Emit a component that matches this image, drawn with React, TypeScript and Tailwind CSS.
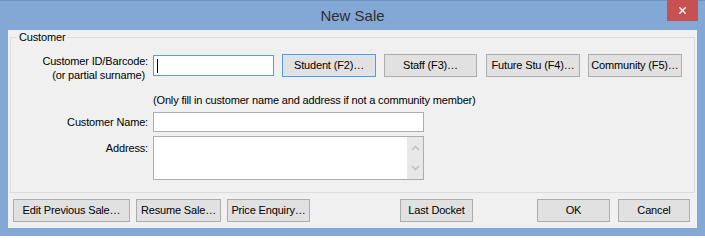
import { X } from 'lucide-react';

const lookupButtons = [
  { label: 'Student (F2)…', width: 'w-[94px]', gap: 'ml-[8px]', focused: true },
  { label: 'Staff (F3)…', width: 'w-[93px]', gap: 'ml-[8px]', focused: false },
  { label: 'Future Stu (F4)…', width: 'w-[94px]', gap: 'ml-[9px]', focused: false },
  { label: 'Community (F5)…', width: 'w-[94px]', gap: 'ml-[8px]', focused: false },
];

function Chevron({ up }: { up?: boolean }) {
  return (
    <svg width="9" height="6" viewBox="0 0 9 6" className="text-[#c2c2c2]">
      <path
        d={up ? 'M1 5 L4.5 1.5 L8 5' : 'M1 1 L4.5 4.5 L8 1'}
        fill="none"
        stroke="currentColor"
        strokeWidth="1.6"
      />
    </svg>
  );
}

export default function App() {
  return (
    <div className="w-[705px] h-[236px] bg-[#84a8d6] border-t border-[#6f92c4] flex flex-col px-[8px] pb-[8px] font-['Liberation_Sans',Arial,sans-serif] text-[11px] tracking-[-0.16px] text-black">
      {/* Title bar */}
      <div className="relative h-[29px] flex items-center justify-center">
        <span className="text-[15px] tracking-normal text-[#2e2e2e] leading-none -mt-[1px]">New Sale</span>
        <button className="absolute -top-[1px] -right-[1px] w-[31px] h-[21px] bg-[#c75050] flex items-center justify-center">
          <X className="w-[11px] h-[11px] text-white" strokeWidth={3} />
        </button>
      </div>

      {/* Client area */}
      <div className="flex-1 bg-[#f0f0f0] flex flex-col">
        {/* Customer group */}
        <div className="relative mt-[7px] mx-[2px] h-[156px] border border-[#dcdcdc] pt-[16px] px-0">
          <span className="absolute -top-[8px] left-[6px] px-[2px] bg-[#f0f0f0] leading-[14px]">Customer</span>

          <div className="flex items-start">
            <div className="w-[137px] text-right leading-[14px]">
              <div>Customer ID/Barcode:</div>
              <div className="pr-[3px]">(or partial surname)</div>
            </div>
            <div className="ml-[5px] mt-[1px] w-[121px] h-[21px] bg-white border border-[#569de5] flex items-center">
              <span className="ml-[3px] w-px h-[14px] bg-black" />
            </div>
            <div className="ml-[8px] flex">
              {lookupButtons.map((b, i) => (
                <button
                  key={b.label}
                  className={`${b.width} ${i > 0 ? b.gap : ''} h-[23px] bg-[#e1e1e1] border ${
                    b.focused ? 'border-[#4a9cec] shadow-[inset_0_0_0_1px_#d6e8fa]' : 'border-[#adadad]'
                  } leading-none`}
                >
                  {b.label}
                </button>
              ))}
            </div>
          </div>

          <div className="mt-[11px] ml-[142px] leading-[14px]">
            (Only fill in customer name and address if not a community member)
          </div>

          <div className="mt-[5px] flex items-center">
            <div className="w-[137px] text-right leading-[14px]">Customer Name:</div>
            <div className="ml-[5px] w-[271px] h-[20px] bg-white border border-[#abadb3]" />
          </div>

          <div className="mt-[4px] flex items-start">
            <div className="w-[137px] text-right leading-[14px] pt-[5px]">Address:</div>
            <div className="ml-[5px] w-[271px] h-[44px] bg-white border border-[#abadb3] flex justify-end">
              <div className="w-[16px] bg-[#e8e8e8] flex flex-col items-center justify-between py-[8px]">
                <Chevron up />
                <Chevron />
              </div>
            </div>
          </div>
        </div>

        {/* Bottom buttons */}
        <div className="mt-[6px] pl-[5px] flex">
          <button className="w-[117px] h-[23px] bg-[#e1e1e1] border border-[#adadad]">Edit Previous Sale…</button>
          <button className="ml-[6px] w-[85px] h-[23px] bg-[#e1e1e1] border border-[#adadad]">Resume Sale…</button>
          <button className="ml-[6px] w-[83px] h-[23px] bg-[#e1e1e1] border border-[#adadad]">Price Enquiry…</button>
          <button className="ml-[90px] w-[73px] h-[23px] bg-[#e1e1e1] border border-[#adadad]">Last Docket</button>
          <button className="ml-[64px] w-[73px] h-[23px] bg-[#e1e1e1] border border-[#adadad]">OK</button>
          <button className="ml-[8px] w-[72px] h-[23px] bg-[#e1e1e1] border border-[#adadad]">Cancel</button>
        </div>
      </div>
    </div>
  );
}
